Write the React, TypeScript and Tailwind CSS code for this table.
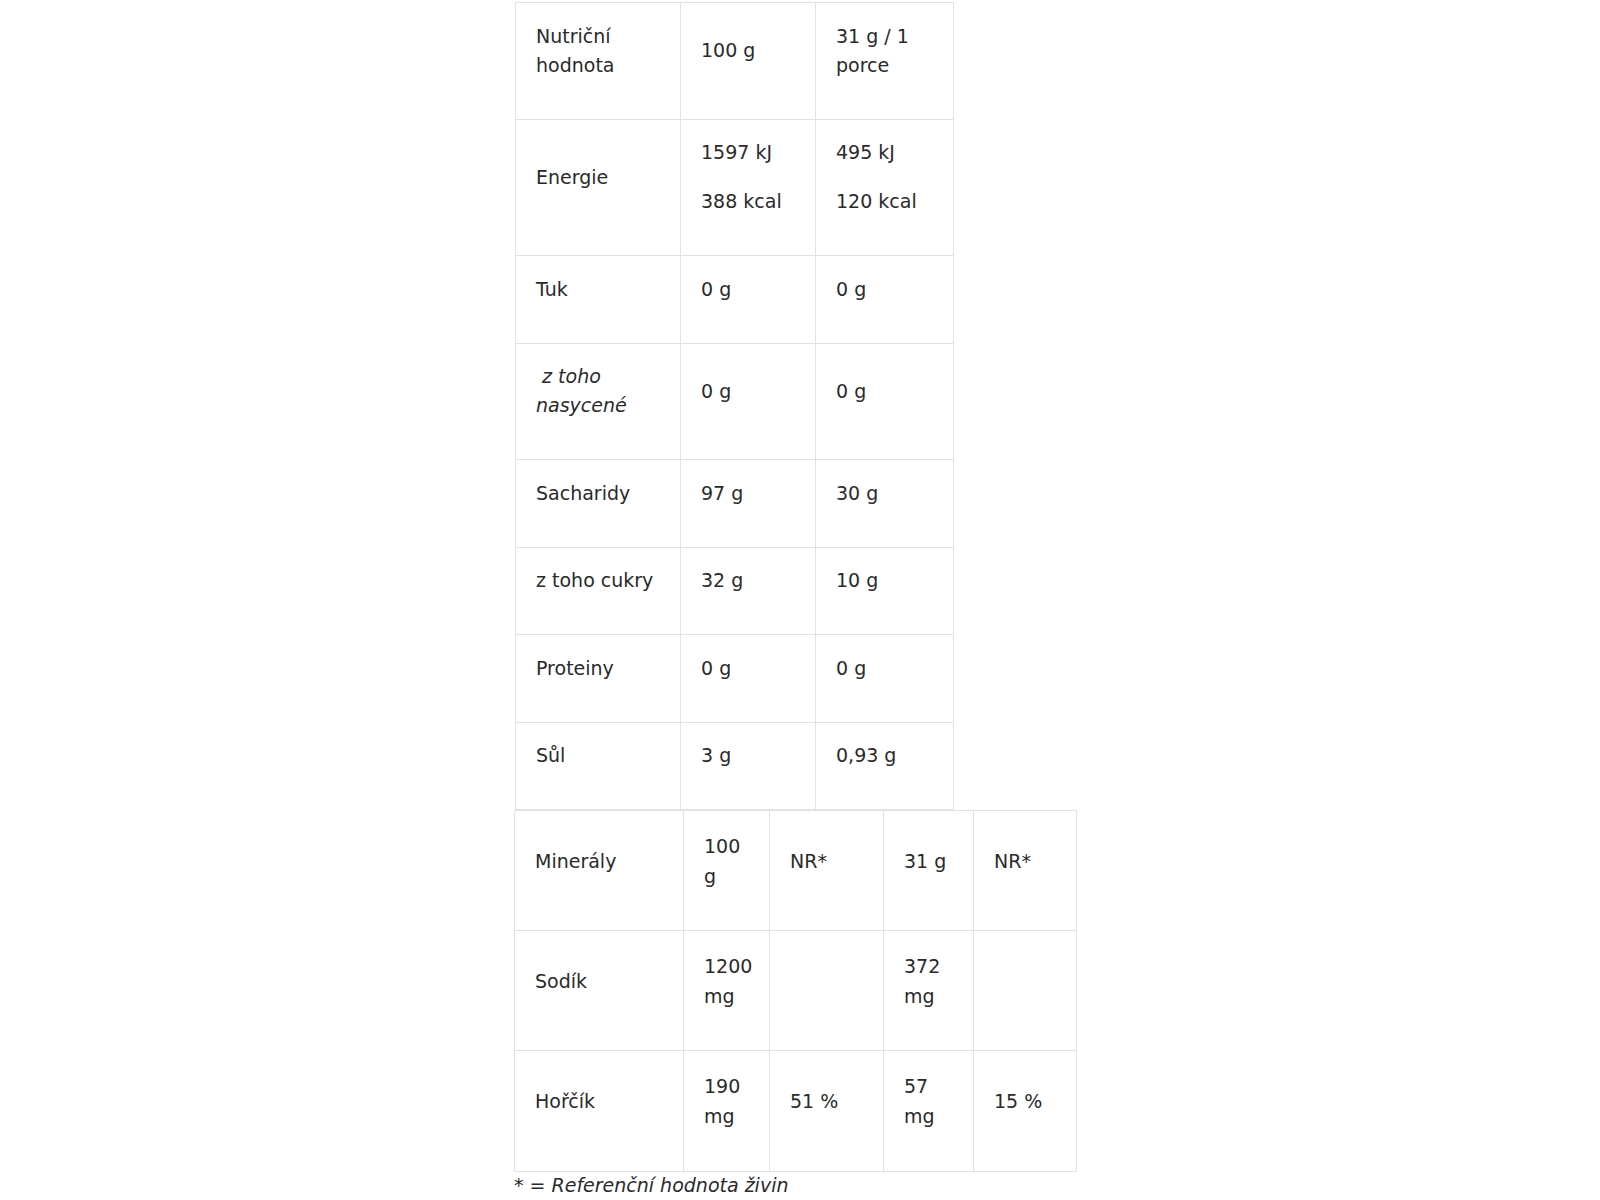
import React from "react";

const cell1 =
  "border border-[#e2e2e2] px-5 py-[18.75px] align-middle text-left font-normal leading-[29px]";
const cell2 =
  "border border-[#e2e2e2] px-5 py-[19.6px] align-middle text-left font-normal leading-[30px]";

function P({ children, italic }: { children: React.ReactNode; italic?: boolean }) {
  return <p className={"mb-5 whitespace-nowrap" + (italic ? " italic" : "")}>{children}</p>;
}

export default function App() {
  const rows1: React.ReactNode[][] = [
    [
      <P>Nutriční<br />hodnota</P>,
      <P>100 g</P>,
      <P>31 g / 1<br />porce</P>,
    ],
    [
      <P>Energie</P>,
      <>
        <P>1597 kJ</P>
        <P>388 kcal</P>
      </>,
      <>
        <P>495 kJ</P>
        <P>120 kcal</P>
      </>,
    ],
    [<P>Tuk</P>, <P>0 g</P>, <P>0 g</P>],
    [
      <P italic>{"\u00a0z toho"}<br />nasycené</P>,
      <P>0 g</P>,
      <P>0 g</P>,
    ],
    [<P>Sacharidy</P>, <P>97 g</P>, <P>30 g</P>],
    [<P>z toho cukry</P>, <P>32 g</P>, <P>10 g</P>],
    [<P>Proteiny</P>, <P>0 g</P>, <P>0 g</P>],
    [<P>Sůl</P>, <P>3 g</P>, <P>0,93 g</P>],
  ];

  const rows2: React.ReactNode[][] = [
    [
      <P>Minerály</P>,
      <P>100<br />g</P>,
      <P>NR*</P>,
      <P>31 g</P>,
      <P>NR*</P>,
    ],
    [
      <P>Sodík</P>,
      <P>1200<br />mg</P>,
      <P>{"\u00a0"}</P>,
      <P>372<br />mg</P>,
      <P>{"\u00a0"}</P>,
    ],
    [
      <P>Hořčík</P>,
      <P>190<br />mg</P>,
      <P>51 %</P>,
      <P>57<br />mg</P>,
      <P>15 %</P>,
    ],
  ];

  const w1 = ["w-[165px]", "w-[135px]", "w-[138px]"];
  const w2 = ["w-[169px]", "w-[86px]", "w-[114px]", "w-[90px]", "w-[103px]"];

  return (
    <div
      className="min-h-[1200px] bg-white text-[19px] leading-[30px] text-[#2a2a2a]"
      style={{ fontFamily: '"DejaVu Sans", "Liberation Sans", sans-serif' }}
    >
      <div className="ml-[514px] pt-[2px]">
        <table className="ml-px table-fixed border-collapse w-[438px]">
          <colgroup>
            {w1.map((w, i) => (
              <col key={i} className={w} />
            ))}
          </colgroup>
          <tbody>
            {rows1.map((r, i) => (
              <tr key={i}>
                {r.map((c, j) => (
                  <td key={j} className={cell1}>
                    {c}
                  </td>
                ))}
              </tr>
            ))}
          </tbody>
        </table>
        <table className="table-fixed border-collapse w-[562px]">
          <colgroup>
            {w2.map((w, i) => (
              <col key={i} className={w} />
            ))}
          </colgroup>
          <tbody>
            {rows2.map((r, i) => (
              <tr key={i}>
                {r.map((c, j) => (
                  <td key={j} className={cell2}>
                    {c}
                  </td>
                ))}
              </tr>
            ))}
          </tbody>
        </table>
        <p className="italic leading-[26px]">* = Referenční hodnota živin</p>
      </div>
    </div>
  );
}
